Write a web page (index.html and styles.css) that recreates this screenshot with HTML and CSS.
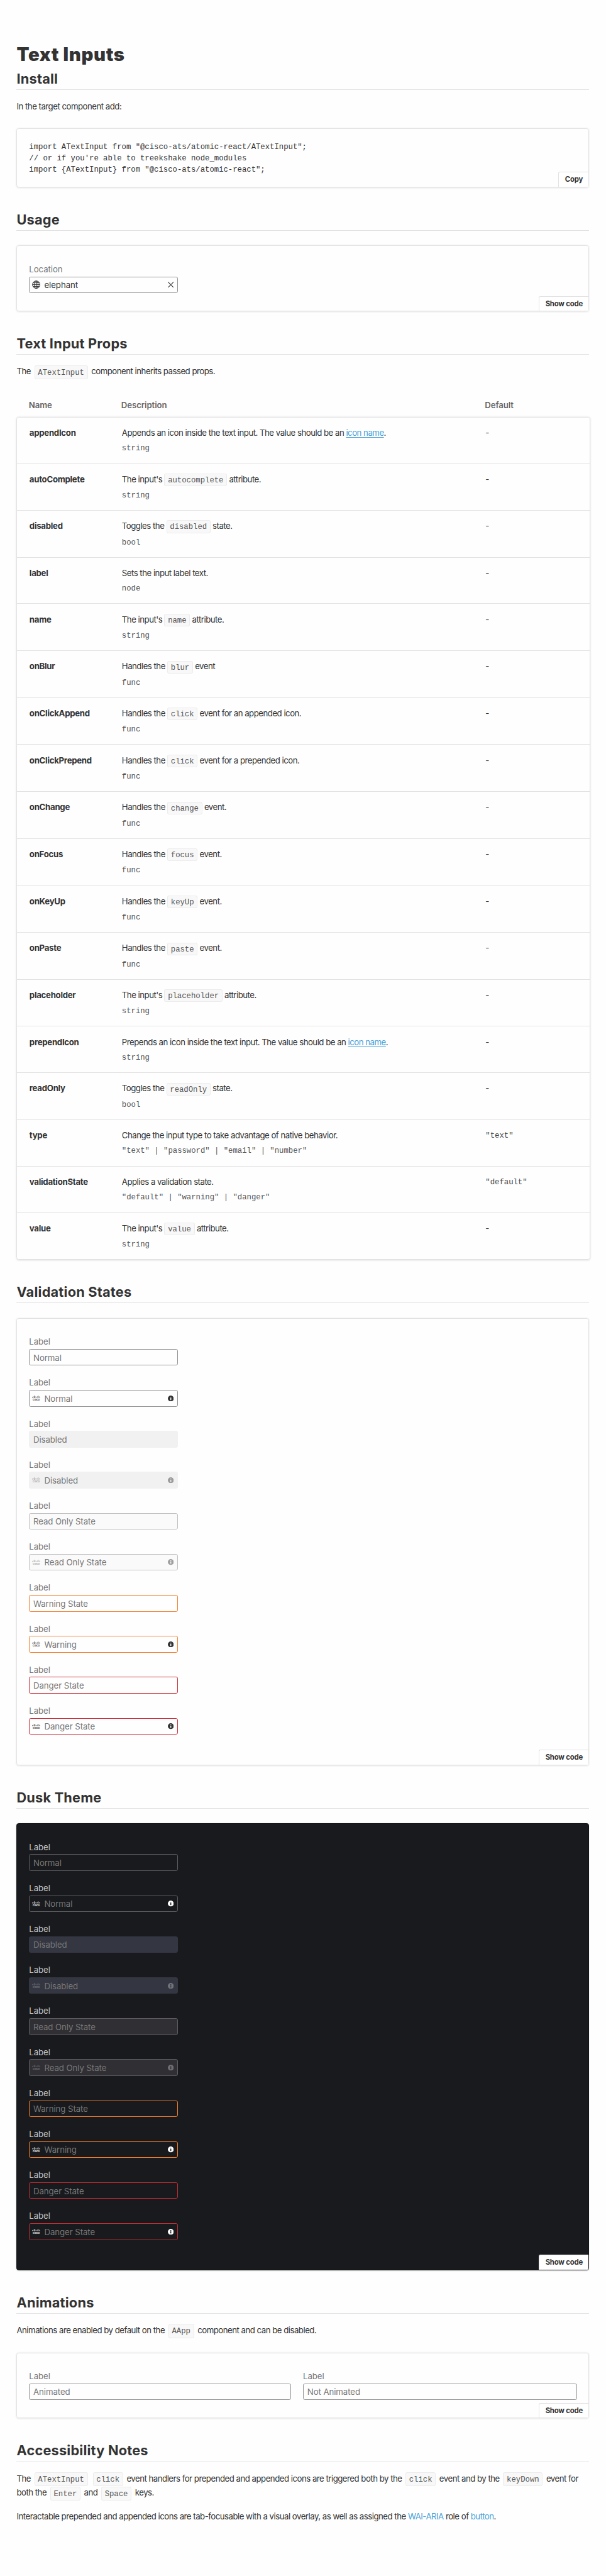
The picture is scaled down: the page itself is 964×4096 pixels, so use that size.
FILE: index.html
```html
<!DOCTYPE html>
<html lang="en">
<head>
<meta charset="utf-8">
<title>Text Inputs</title>
<link rel="stylesheet" href="styles.css">
</head>
<body>
<svg class="sprite" aria-hidden="true">
  <symbol id="info" viewBox="0 0 16 16">
    <path fill-rule="evenodd" d="M8 0a8 8 0 1 0 0 16A8 8 0 0 0 8 0zM6.8 3.6h2.4v2H6.8zM6.8 6.8h2.4v5.6H6.8z"/>
  </symbol>
  <symbol id="cisco" viewBox="0 0 14 9">
    <path fill="none" stroke="currentColor" stroke-width=".7" stroke-linecap="round" d="M.5 2.6v.7M2.1 1.8v1.5M3.7.5v3.2M5.3 1.8v1.5M7 2.6v.7M8.7 1.8v1.5M10.3.5v3.2M11.9 1.8v1.5M13.5 2.6v.7"/>
    <text x="1" y="8.4" textLength="12" lengthAdjust="spacingAndGlyphs">cisco</text>
  </symbol>
  <symbol id="globe" viewBox="0 0 16 16">
    <g fill="none" stroke="currentColor" stroke-width="1.2"><circle cx="8" cy="8" r="7.2"/><ellipse cx="8" cy="8" rx="3.6" ry="7.2"/><path d="M8 .8v14.4M.8 8h14.4M2 4.4h12M2 11.6h12"/></g>
  </symbol>
  <symbol id="close" viewBox="0 0 10 10"><path fill="none" stroke="currentColor" stroke-width="1.1" d="M.4.4l9.2 9.2M9.6.4L.4 9.6"/></symbol>
</svg>
<main class="page">
  <h1>Text Inputs</h1>

  <h2 class="first">Install</h2>
  <p>In the target component add:</p>
  <div class="card card-code">
    <pre>import ATextInput from "@cisco-ats/atomic-react/ATextInput";
// or if you're able to treekshake node_modules
import {ATextInput} from "@cisco-ats/atomic-react";</pre>
    <button class="tab">Copy</button>
  </div>

  <h2>Usage</h2>
  <div class="card card-short">
    <div class="field"><label>Location</label><div class="input filled"><svg class="globe"><use href="#globe"/></svg><span>elephant</span><svg class="close"><use href="#close"/></svg></div></div>
    <button class="tab">Show code</button>
  </div>

  <h2>Text Input Props</h2>
  <p>The <code>ATextInput</code> component inherits passed props.</p>
  <div class="thead row"><span>Name</span><span>Description</span><span>Default</span></div>
  <div class="table">
    <div class="row"><b>appendIcon</b><div>Appends an icon inside the text input. The value should be an <a href="#">icon name</a>.<i>string</i></div><span>-</span></div>
    <div class="row tall"><b>autoComplete</b><div>The input's <code>autocomplete</code> attribute.<i>string</i></div><span>-</span></div>
    <div class="row tall"><b>disabled</b><div>Toggles the <code>disabled</code> state.<i>bool</i></div><span>-</span></div>
    <div class="row"><b>label</b><div>Sets the input label text.<i>node</i></div><span>-</span></div>
    <div class="row tall"><b>name</b><div>The input's <code>name</code> attribute.<i>string</i></div><span>-</span></div>
    <div class="row tall"><b>onBlur</b><div>Handles the <code>blur</code> event<i>func</i></div><span>-</span></div>
    <div class="row tall"><b>onClickAppend</b><div>Handles the <code>click</code> event for an appended icon.<i>func</i></div><span>-</span></div>
    <div class="row tall"><b>onClickPrepend</b><div>Handles the <code>click</code> event for a prepended icon.<i>func</i></div><span>-</span></div>
    <div class="row tall"><b>onChange</b><div>Handles the <code>change</code> event.<i>func</i></div><span>-</span></div>
    <div class="row tall"><b>onFocus</b><div>Handles the <code>focus</code> event.<i>func</i></div><span>-</span></div>
    <div class="row tall"><b>onKeyUp</b><div>Handles the <code>keyUp</code> event.<i>func</i></div><span>-</span></div>
    <div class="row tall"><b>onPaste</b><div>Handles the <code>paste</code> event.<i>func</i></div><span>-</span></div>
    <div class="row tall"><b>placeholder</b><div>The input's <code>placeholder</code> attribute.<i>string</i></div><span>-</span></div>
    <div class="row"><b>prependIcon</b><div>Prepends an icon inside the text input. The value should be an <a href="#">icon name</a>.<i>string</i></div><span>-</span></div>
    <div class="row tall"><b>readOnly</b><div>Toggles the <code>readOnly</code> state.<i>bool</i></div><span>-</span></div>
    <div class="row"><b>type</b><div>Change the input type to take advantage of native behavior.<i>"text" | "password" | "email" | "number"</i></div><span class="mono">"text"</span></div>
    <div class="row"><b>validationState</b><div>Applies a validation state.<i>"default" | "warning" | "danger"</i></div><span class="mono">"default"</span></div>
    <div class="row tall"><b>value</b><div>The input's <code>value</code> attribute.<i>string</i></div><span>-</span></div>
  </div>

  <h2>Validation States</h2>
  <div class="card card-long">
    <div class="field"><label>Label</label><div class="input"><span>Normal</span></div></div>
    <div class="field"><label>Label</label><div class="input"><svg class="cisco"><use href="#cisco"/></svg><span>Normal</span><svg class="info"><use href="#info"/></svg></div></div>
    <div class="field"><label>Label</label><div class="input disabled"><span>Disabled</span></div></div>
    <div class="field"><label>Label</label><div class="input disabled"><svg class="cisco"><use href="#cisco"/></svg><span>Disabled</span><svg class="info"><use href="#info"/></svg></div></div>
    <div class="field"><label>Label</label><div class="input readonly"><span>Read Only State</span></div></div>
    <div class="field"><label>Label</label><div class="input readonly"><svg class="cisco"><use href="#cisco"/></svg><span>Read Only State</span><svg class="info"><use href="#info"/></svg></div></div>
    <div class="field"><label>Label</label><div class="input warning"><span>Warning State</span></div></div>
    <div class="field"><label>Label</label><div class="input warning"><svg class="cisco"><use href="#cisco"/></svg><span>Warning</span><svg class="info"><use href="#info"/></svg></div></div>
    <div class="field"><label>Label</label><div class="input danger"><span>Danger State</span></div></div>
    <div class="field"><label>Label</label><div class="input danger"><svg class="cisco"><use href="#cisco"/></svg><span>Danger State</span><svg class="info"><use href="#info"/></svg></div></div>
    <button class="tab">Show code</button>
  </div>

  <h2>Dusk Theme</h2>
  <div class="card card-long dusk">
    <div class="field"><label>Label</label><div class="input"><span>Normal</span></div></div>
    <div class="field"><label>Label</label><div class="input"><svg class="cisco"><use href="#cisco"/></svg><span>Normal</span><svg class="info"><use href="#info"/></svg></div></div>
    <div class="field"><label>Label</label><div class="input disabled"><span>Disabled</span></div></div>
    <div class="field"><label>Label</label><div class="input disabled"><svg class="cisco"><use href="#cisco"/></svg><span>Disabled</span><svg class="info"><use href="#info"/></svg></div></div>
    <div class="field"><label>Label</label><div class="input readonly"><span>Read Only State</span></div></div>
    <div class="field"><label>Label</label><div class="input readonly"><svg class="cisco"><use href="#cisco"/></svg><span>Read Only State</span><svg class="info"><use href="#info"/></svg></div></div>
    <div class="field"><label>Label</label><div class="input warning"><span>Warning State</span></div></div>
    <div class="field"><label>Label</label><div class="input warning"><svg class="cisco"><use href="#cisco"/></svg><span>Warning</span><svg class="info"><use href="#info"/></svg></div></div>
    <div class="field"><label>Label</label><div class="input danger"><span>Danger State</span></div></div>
    <div class="field"><label>Label</label><div class="input danger"><svg class="cisco"><use href="#cisco"/></svg><span>Danger State</span><svg class="info"><use href="#info"/></svg></div></div>
    <button class="tab">Show code</button>
  </div>

  <h2>Animations</h2>
  <p>Animations are enabled by default on the <code>AApp</code> component and can be disabled.</p>
  <div class="card card-short">
    <div class="pair">
      <div class="field"><label>Label</label><div class="input"><span>Animated</span></div></div>
      <div class="field"><label>Label</label><div class="input"><span>Not Animated</span></div></div>
    </div>
    <button class="tab">Show code</button>
  </div>

  <h2>Accessibility Notes</h2>
  <p>The <code>ATextInput</code> <code>click</code> event handlers for prepended and appended icons are triggered both by the <code>click</code> event and by the <code>keyDown</code> event for<br>both the <code>Enter</code> and <code>Space</code> keys.</p>
  <p>Interactable prepended and appended icons are tab-focusable with a visual overlay, as well as assigned the <a href="#">WAI-ARIA</a> role of <a href="#">button</a>.</p>
</main>
</body>
</html>
```
FILE: styles.css
```css
* { box-sizing: border-box; }

body {
  margin: 0;
  background: #fefefe;
  color: #333;
  font: 14px/24px Inter, "Liberation Sans", sans-serif;
  letter-spacing: -0.535px;
}

.sprite { display: none; }

.page {
  zoom: 0.9453;
  width: 1019.7px;
  height: 4333px;
  padding: 73px 28px 0;
  overflow: hidden;
}

h1 { margin: 0; font-size: 31px; line-height: 38px; font-weight: 900; letter-spacing: .7px; }

h2 {
  margin: 38px 0 0;
  padding-bottom: 2px;
  border-bottom: 1px solid #e2e2e3;
  font-size: 23px;
  line-height: 32px;
  font-weight: 700;
  letter-spacing: .22px;
}
h2.first { margin-top: 5px; }

p { margin: 16px 0 0; }
a { color: #48a1d9; text-decoration: none; }
.table a { text-decoration: underline; text-underline-offset: 2px; }

code, pre, i, .mono {
  font-family: "Liberation Mono", monospace;
  font-size: 13px;
  letter-spacing: 0;
}
code {
  margin: 0 2.5px;
  padding: 4px 5px 3px;
  border: 1px solid #ececed;
  border-radius: 3px;
  background: #f8f8f8;
  color: #555;
  line-height: 1;
}
.table code { margin: 0; padding: 3px 5px 1.5px; }

.card {
  position: relative;
  margin-top: 25px;
  padding: 28px 20px 0;
  border: 1px solid #e2e2e3;
  border-radius: 4px;
  box-shadow: 0 1px 3px rgba(0, 0, 0, .1);
}
.card-code { height: 99px; padding-top: 22px; }
.card-short { height: 111px; }
.card-long { height: 752px; }
pre { margin: 0; line-height: 19px; }

.tab {
  position: absolute;
  right: 0;
  bottom: 0;
  height: 25px;
  padding: 0 10px;
  border: solid #e2e2e3;
  border-width: 1px 0 0 1px;
  border-radius: 3px 0 3px 0;
  background: #fff;
  color: #333;
  font: 700 12px/22px Inter, sans-serif;
  letter-spacing: -.2px;
}

.row {
  display: grid;
  grid-template-columns: 155.5px 612px 1fr;
  height: 78px;
  padding: 14px 20.5px 0;
  border-bottom: 1px solid #e2e2e3;
}
.row.tall { height: 79px; }
.row:last-child { border-bottom: 0; }
.row b { font-weight: 700; letter-spacing: -.3px; }
.row i { display: block; padding-top: 2.5px; font-style: normal; color: #555; }
.row.tall i { padding-top: 4px; }
.row .mono { padding-top: 1px; color: #444; }
.thead.row {
  height: 31px;
  margin-top: 33px;
  padding-top: 0;
  border: 0;
  color: #666;
  font-weight: 600;
  letter-spacing: -.1px;
}
.table {
  width: 965px;
  height: 1418px;
  border: 1px solid #e2e2e3;
  border-radius: 4px;
  box-shadow: 0 1px 3px rgba(0, 0, 0, .14);
}

.field { width: 250px; margin-bottom: 18px; letter-spacing: -.08px; }
label { display: block; height: 23px; line-height: 23px; color: #777; }
.input {
  display: flex;
  align-items: center;
  height: 28px;
  padding: 0 6px;
  border: 1px solid #929294;
  border-radius: 3px;
  color: #777;
}
.input span { padding-top: 1.5px; }
.input svg { display: block; flex: none; color: #333; fill: currentColor; }
.cisco { width: 14px; height: 9px; margin: 0 6.5px 0 -2px; }
.cisco + span, .globe + span { flex: 1; }
.globe { width: 14px; height: 14px; margin: 0 6.5px 0 -2px; }
.info { width: 10px; height: 10px; }
.close { width: 10px; height: 10px; }
#cisco text { font: 600 5px Inter, sans-serif; letter-spacing: 0; }
.input.filled { color: #333; }

.disabled { background: #f1f1f1; border-color: #f1f1f1; }
.readonly { background: #fafafa; border-color: #c0c0c2; }
.disabled svg, .readonly svg { opacity: .45; }
.warning { border-color: #f08030; }
.danger { border-color: #c9303a; }

.dusk { background: #191a1d; border-color: #111215; }
.dusk label { color: #c4c4c6; }
.dusk .input { border-color: #5d5d61; }
.dusk .input svg { color: #fff; }
.dusk .disabled { background: #343641; border-color: #343641; }
.dusk .readonly { background: #302f34; }
.dusk .disabled svg, .dusk .readonly svg { opacity: .3; }
.dusk .warning { border-color: #f08030; }
.dusk .danger { border-color: #b92f36; }

.pair { display: grid; grid-template-columns: 441px 461px; gap: 20px; }
.pair .field { width: auto; }
```
